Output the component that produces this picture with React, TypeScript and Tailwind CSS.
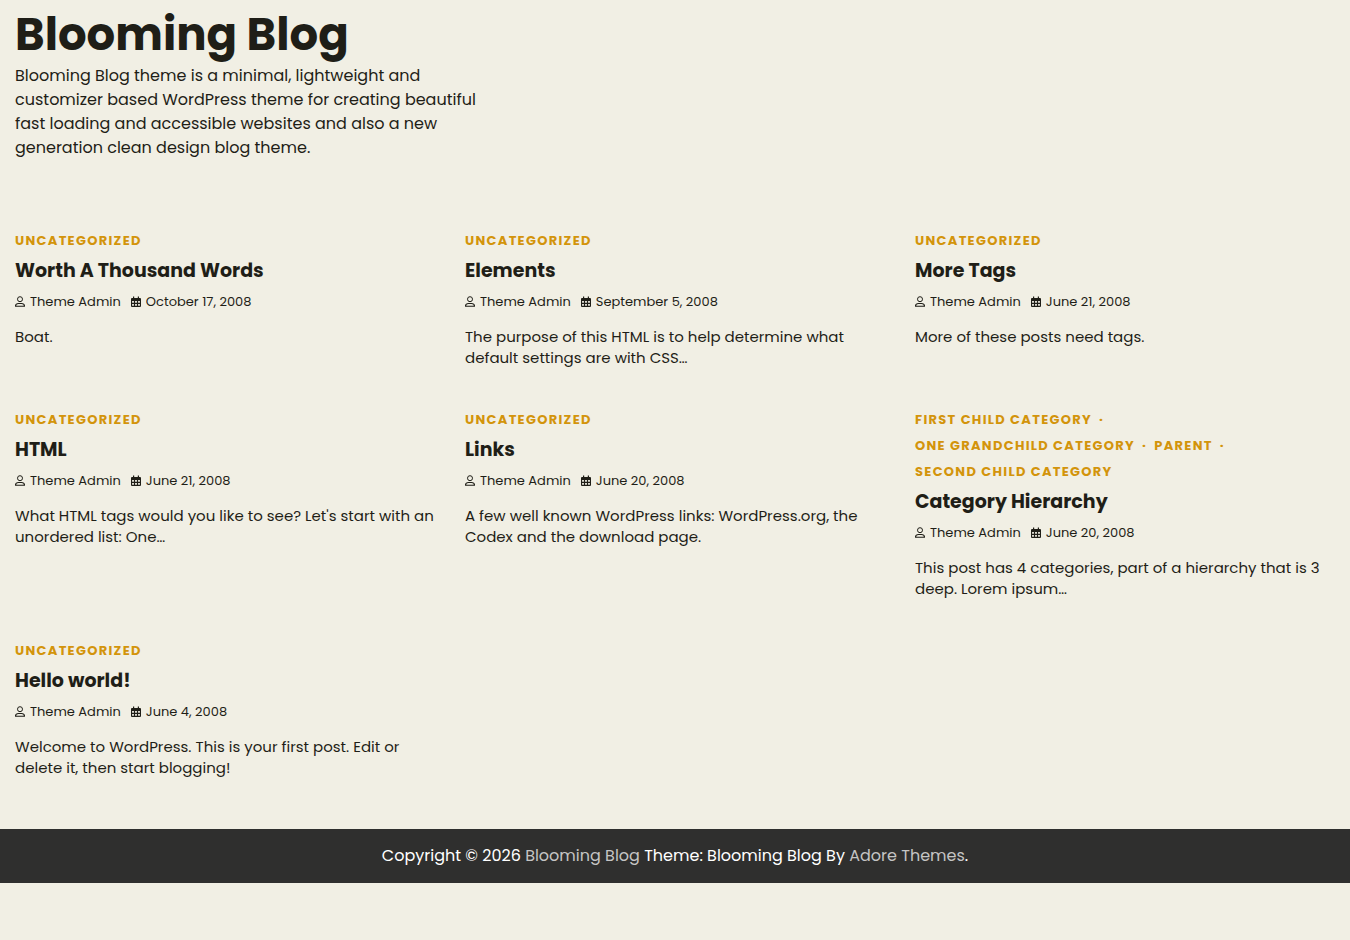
type Post = {
  title: string;
  categories: string[];
  date: string;
  excerpt: string;
};

const POSTS: Post[] = [
  {
    title: "Worth A Thousand Words",
    categories: ["Uncategorized"],
    date: "October 17, 2008",
    excerpt: "Boat.",
  },
  {
    title: "Elements",
    categories: ["Uncategorized"],
    date: "September 5, 2008",
    excerpt: "The purpose of this HTML is to help determine what default settings are with CSS…",
  },
  {
    title: "More Tags",
    categories: ["Uncategorized"],
    date: "June 21, 2008",
    excerpt: "More of these posts need tags.",
  },
  {
    title: "HTML",
    categories: ["Uncategorized"],
    date: "June 21, 2008",
    excerpt: "What HTML tags would you like to see? Let's start with an unordered list: One…",
  },
  {
    title: "Links",
    categories: ["Uncategorized"],
    date: "June 20, 2008",
    excerpt: "A few well known WordPress links: WordPress.org, the Codex and the download page.",
  },
  {
    title: "Category Hierarchy",
    categories: ["First Child Category", "One Grandchild Category", "Parent", "Second Child Category"],
    date: "June 20, 2008",
    excerpt: "This post has 4 categories, part of a hierarchy that is 3 deep. Lorem ipsum…",
  },
  {
    title: "Hello world!",
    categories: ["Uncategorized"],
    date: "June 4, 2008",
    excerpt: "Welcome to WordPress. This is your first post. Edit or delete it, then start blogging!",
  },
];

function UserIcon() {
  return (
    <svg viewBox="0 0 10 12" className="h-3 w-[10px]" fill="none" stroke="currentColor" aria-hidden="true">
      <circle cx="5" cy="3.2" r="2.5" />
      <path d="M.5 10.3c0-1.8 1.3-2.8 3-2.8h3c1.7 0 3 1 3 2.8z" strokeWidth="1.1" strokeLinejoin="round" />
    </svg>
  );
}

function CalendarIcon() {
  return (
    <svg viewBox="0 0 10 12" className="h-3 w-[10px]" fill="currentColor" aria-hidden="true">
      <path
        fillRule="evenodd"
        d="M2 .5h1.2V2h3.6V.5H8V2h1a1 1 0 0 1 1 1v7a1 1 0 0 1-1 1H1a1 1 0 0 1-1-1V3a1 1 0 0 1 1-1h1zM1.1 5v1.8h1.8V5zM4.1 5v1.8h1.8V5zM7.1 5v1.8h1.8V5zM1.1 8v1.8h1.8V8zM4.1 8v1.8h1.8V8zM7.1 8v1.8h1.8V8z"
      />
    </svg>
  );
}

function PostCard({ post }: { post: Post }) {
  return (
    <article>
      <ul className="flex flex-wrap text-[13px] leading-[26px] font-bold uppercase tracking-widest text-[#d3940b]">
        {post.categories.map((c, i) => (
          <li key={c} className="whitespace-nowrap">
            <a href="#">{c}</a>
            {i < post.categories.length - 1 && <span className="mx-[7px]">·</span>}
          </li>
        ))}
      </ul>
      <h2 className="mt-[3px] text-[19px] leading-7 font-bold">
        <a href="#">{post.title}</a>
      </h2>
      <div className="mt-[7px] flex items-center gap-[10px] text-[13px] leading-5">
        <a href="#" className="flex items-center gap-[5px]">
          <UserIcon />
          Theme Admin
        </a>
        <a href="#" className="flex items-center gap-[5px]">
          <CalendarIcon />
          <time>{post.date}</time>
        </a>
      </div>
      <p className="mt-[14px] text-[15px] leading-[21px]">{post.excerpt}</p>
    </article>
  );
}

export default function App() {
  return (
    <div className="min-h-screen bg-[#f1efe4] font-[Poppins,Inter,sans-serif] text-[#1f1e17]">
      <header className="px-[15px] pt-[6px]">
        <h1 className="text-[45px] leading-[58px] font-bold">
          <a href="#">Blooming Blog</a>
        </h1>
        <p className="max-w-[470px] text-base leading-6">
          Blooming Blog theme is a minimal, lightweight and customizer based WordPress theme for
          creating beautiful fast loading and accessible websites and also a new generation clean
          design blog theme.
        </p>
      </header>

      <main className="grid grid-cols-3 gap-x-[30px] gap-y-[39px] px-[15px] pt-[68px] pb-[51px]">
        {POSTS.map((post) => (
          <PostCard key={post.title} post={post} />
        ))}
      </main>

      <footer className="bg-[#2f2f2e] px-[15px] py-[15px] text-center text-base leading-6 text-white">
        Copyright © 2026{" "}
        <a href="#" className="text-[#c5c5c4]">Blooming Blog</a>{" "}
        Theme: Blooming Blog By{" "}
        <a href="#" className="text-[#c5c5c4]">Adore Themes</a>.
      </footer>
    </div>
  );
}
